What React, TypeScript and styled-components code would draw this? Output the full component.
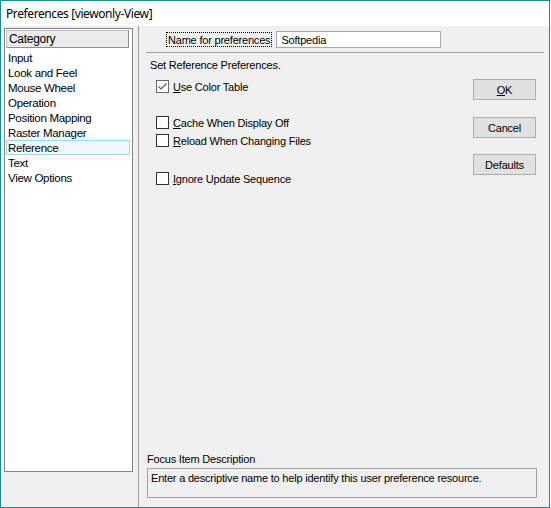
import React from "react";
import styled, { createGlobalStyle } from "styled-components";

const categories = [
  "Input",
  "Look and Feel",
  "Mouse Wheel",
  "Operation",
  "Position Mapping",
  "Raster Manager",
  "Reference",
  "Text",
  "View Options",
];

interface OptionDef {
  key: string;
  mnemonic: string;
  rest: string;
  checked: boolean;
  gap: number;
}

const options: OptionDef[] = [
  { key: "color", mnemonic: "U", rest: "se Color Table", checked: true, gap: 8 },
  { key: "cache", mnemonic: "C", rest: "ache When Display Off", checked: false, gap: 23 },
  { key: "reload", mnemonic: "R", rest: "eload When Changing Files", checked: false, gap: 5 },
  { key: "ignore", mnemonic: "I", rest: "gnore Update Sequence", checked: false, gap: 25 },
];

const App = () => {
  const selected = "Reference";

  return (
    <>
      <GlobalStyle />
      <Window>
        <TitleBar>Preferences [viewonly-View]</TitleBar>
        <Body>
          <Sidebar>
            <CategoryList>
              <ListHeader>Category</ListHeader>
              {categories.map((name) => (
                <ListItem key={name} selected={name === selected}>
                  {name}
                </ListItem>
              ))}
            </CategoryList>
          </Sidebar>
          <Divider />
          <Pane>
            <NameRow>
              <FocusLabel>Name for preferences</FocusLabel>
              <NameInput>Softpedia</NameInput>
            </NameRow>
            <Separator />
            <Content>
              <Options>
                <Heading>Set Reference Preferences.</Heading>
                {options.map((opt) => (
                  <OptionRow key={opt.key} gap={opt.gap}>
                    <CheckBox checked={opt.checked}>
                      {opt.checked && (
                        <svg width="11" height="11" viewBox="0 0 11 11">
                          <path
                            d="M1.5 5.5 L4 8 L9.5 2.5"
                            fill="none"
                            stroke="#5a5a5a"
                            strokeWidth="1.2"
                          />
                        </svg>
                      )}
                    </CheckBox>
                    <span>
                      <u>{opt.mnemonic}</u>
                      {opt.rest}
                    </span>
                  </OptionRow>
                ))}
              </Options>
              <Buttons>
                <Button gap={26}>
                  <u>O</u>K
                </Button>
                <Button gap={17}>Cancel</Button>
                <Button gap={16}>Defaults</Button>
              </Buttons>
            </Content>
            <Footer>
              <FooterLabel>Focus Item Description</FooterLabel>
              <DescriptionBox>
                Enter a descriptive name to help identify this user preference
                resource.
              </DescriptionBox>
            </Footer>
          </Pane>
        </Body>
      </Window>
    </>
  );
};

export default App;

const GlobalStyle = createGlobalStyle`
  html, body {
    margin: 0;
    padding: 0;
    background: #ffffff;
  }
  #root {
    width: 551px;
    height: 508px;
  }
`;

const Window = styled.div`
  box-sizing: border-box;
  width: 550px;
  height: 508px;
  border: 1px solid #1b8a8e;
  display: flex;
  flex-direction: column;
  font-family: "Liberation Sans", Arial, sans-serif;
  font-size: 11px;
  letter-spacing: -0.2px;
  color: #000;
  overflow: hidden;
`;

const TitleBar = styled.div`
  height: 25px;
  flex: none;
  display: flex;
  align-items: center;
  padding-left: 5px;
  background: #ffffff;
  font-family: "Noto Sans", "Liberation Sans", sans-serif;
  font-size: 12px;
  letter-spacing: -0.4px;
`;

const Body = styled.div`
  flex: 1;
  display: flex;
  background: #f0f0f0;
  min-height: 0;
`;

const Sidebar = styled.div`
  width: 137px;
  flex: none;
  box-sizing: border-box;
  padding: 2px 5px 35px 3px;
  display: flex;
`;

const CategoryList = styled.div`
  flex: 1;
  background: #ffffff;
  border: 1px solid #828790;
  padding: 1px;
  display: flex;
  flex-direction: column;
`;

const ListHeader = styled.div`
  height: 18px;
  box-sizing: border-box;
  margin: 0 2px 2px 0;
  padding-left: 2px;
  display: flex;
  align-items: center;
  background: #ebebeb;
  border: 1px solid #c4c4c4;
  border-right-color: #8e8e8e;
  border-bottom-color: #8e8e8e;
  font-size: 12px;
  letter-spacing: -0.3px;
`;

const ListItem = styled.div<{ selected?: boolean }>`
  height: 15px;
  box-sizing: border-box;
  margin-right: 1px;
  padding-left: 1px;
  display: flex;
  align-items: center;
  font-size: 11.5px;
  letter-spacing: -0.3px;
  border: 1px solid ${(p) => (p.selected ? "#9fd5f6" : "transparent")};
  background: ${(p) => (p.selected ? "#f2f9fe" : "transparent")};
`;

const Divider = styled.div`
  width: 1px;
  flex: none;
  background: #a0a0a0;
`;

const Pane = styled.div`
  flex: 1;
  display: flex;
  flex-direction: column;
  padding: 5px 5px 9px 7px;
`;

const NameRow = styled.div`
  display: flex;
  align-items: center;
  gap: 4px;
  height: 17px;
  padding-left: 20px;
`;

const FocusLabel = styled.div`
  height: 15px;
  box-sizing: border-box;
  padding: 0 1px;
  display: flex;
  align-items: center;
  border: 1px dotted #000;
`;

const NameInput = styled.div`
  width: 165px;
  height: 17px;
  box-sizing: border-box;
  padding-left: 4px;
  display: flex;
  align-items: center;
  background: #ffffff;
  border: 1px solid #a8a8a8;
`;

const Separator = styled.div`
  height: 1px;
  margin-top: 4px;
  background: #a0a0a0;
`;

const Content = styled.div`
  display: flex;
`;

const Options = styled.div`
  flex: 1;
  display: flex;
  flex-direction: column;
`;

const Heading = styled.div`
  margin: 6px 0 0 4px;
  line-height: 13px;
`;

const OptionRow = styled.div<{ gap: number }>`
  margin-top: ${(p) => p.gap}px;
  padding-left: 10px;
  height: 13px;
  display: flex;
  align-items: center;
  gap: 4px;
`;

const CheckBox = styled.div<{ checked?: boolean }>`
  width: 13px;
  height: 13px;
  box-sizing: border-box;
  flex: none;
  display: flex;
  align-items: center;
  justify-content: center;
  background: #ffffff;
  border: 1px solid ${(p) => (p.checked ? "#6a6a6a" : "#333333")};
`;

const Buttons = styled.div`
  width: 63px;
  flex: none;
  margin-right: 8px;
  display: flex;
  flex-direction: column;
`;

const Button = styled.div<{ gap: number }>`
  margin-top: ${(p) => p.gap}px;
  height: 21px;
  box-sizing: border-box;
  display: flex;
  align-items: center;
  justify-content: center;
  background: #e1e1e1;
  border: 1px solid #adadad;
`;

const Footer = styled.div`
  margin-top: auto;
  display: flex;
  flex-direction: column;
`;

const FooterLabel = styled.div`
  line-height: 13px;
  margin-left: 1px;
`;

const DescriptionBox = styled.div`
  width: 390px;
  height: 30px;
  box-sizing: border-box;
  margin: 2px 0 0 1px;
  padding: 3px 3px;
  border: 1px solid #a0a0a0;
`;
